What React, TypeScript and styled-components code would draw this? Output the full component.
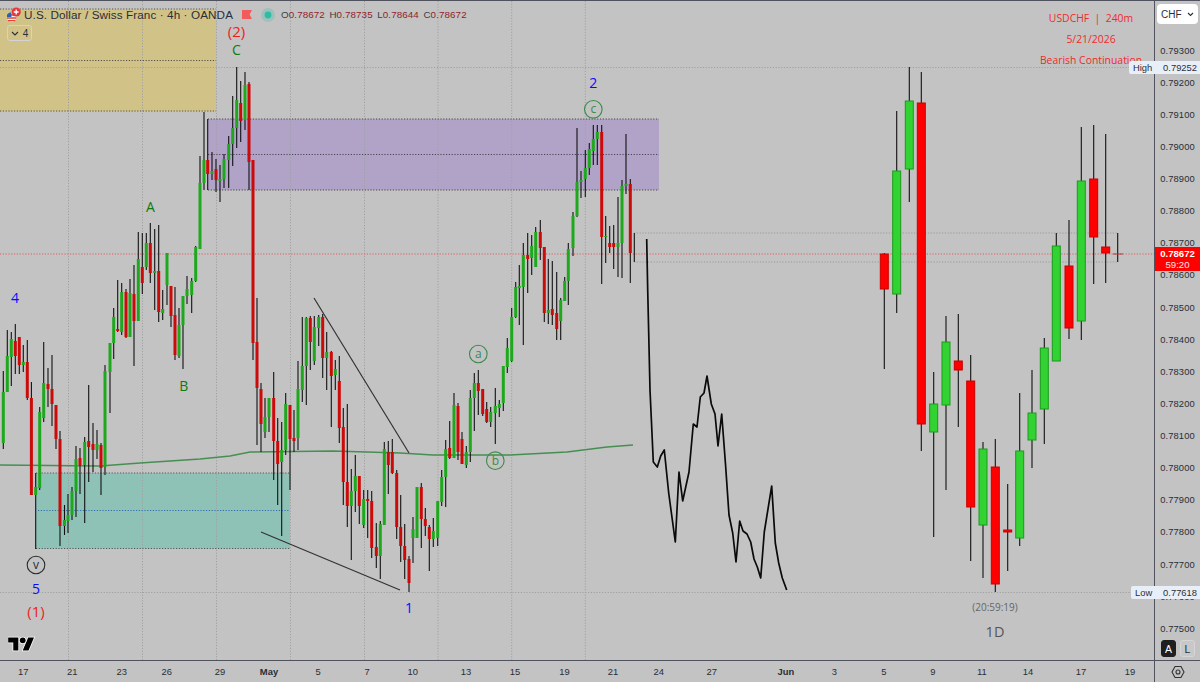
import React from 'react'
import styled, { createGlobalStyle } from 'styled-components'

type Candle = [number, number, number, number, number, 'g' | 'r']

// pixel positions read off the chart: x, wick top, wick bottom, body top, body bottom, colour
const h4Candles: Candle[] = [
  [3.3, 371, 449, 392, 443, 'g'], [7.3, 330, 392, 356, 392, 'g'], [11.3, 332, 386, 339, 357, 'g'], [15.3, 324, 374, 341, 356, 'r'],
  [19.3, 337, 374, 337, 365, 'r'], [23.3, 345, 372, 362, 365, 'g'], [27.3, 340, 400, 362, 398, 'r'], [31.4, 382, 495, 398, 495, 'r'],
  [35.7, 473, 549, 487, 495, 'g'], [39.7, 407, 490, 412, 488, 'g'], [43.7, 342, 422, 383, 418, 'g'], [48, 368, 407, 384, 389, 'r'],
  [52, 355, 426, 389, 404, 'r'], [56, 405, 449, 405, 439, 'r'], [60, 431, 546, 439, 526, 'r'], [64.5, 505, 535, 520, 526, 'g'],
  [68, 494, 533, 515, 521, 'g'], [72, 487, 520, 491, 515, 'g'], [76, 446, 517, 459, 491, 'g'], [80, 448, 494, 458, 465, 'r'],
  [84.7, 437, 523, 442, 465, 'g'], [88.7, 385, 482, 441, 447, 'r'], [93, 423, 472, 444, 450, 'r'], [97, 430, 459, 444, 450, 'g'],
  [101, 443, 495, 445, 468, 'r'], [105, 365, 475, 371, 467, 'g'], [110, 343, 413, 343, 372, 'g'], [113.7, 308, 359, 317, 343, 'g'],
  [117.7, 280, 332, 329, 331, 'r'], [121.7, 283, 335, 292, 332, 'g'], [126, 289, 338, 292, 337, 'r'], [130, 279, 337, 293, 337, 'g'],
  [134, 265, 366, 294, 321, 'r'], [138.3, 232, 321, 259, 321, 'g'], [142.3, 233, 294, 267, 283, 'r'], [146.3, 233, 270, 243, 267, 'g'],
  [150.3, 223, 283, 243, 273, 'r'], [154.7, 229, 310, 271, 273, 'g'], [158.7, 225, 322, 271, 312, 'r'], [162.7, 290, 320, 309, 313, 'g'],
  [167, 253, 305, 253, 285, 'g'], [171, 286, 327, 286, 316, 'r'], [175, 287, 360, 315, 355, 'r'], [179, 308, 358, 325, 356, 'g'],
  [183, 296, 369, 296, 325, 'g'], [187, 276, 304, 289, 296, 'g'], [191.7, 278, 313, 281, 295, 'g'], [195.7, 246, 282, 247, 281, 'g'],
  [200, 156, 249, 183, 249, 'g'], [204, 112, 190, 160, 183, 'g'], [207.7, 119, 190, 160, 174, 'r'], [212, 152, 180, 171, 174, 'g'],
  [216, 159, 192, 169, 180, 'r'], [220, 165, 202, 179, 181, 'g'], [224, 154, 188, 159, 179, 'g'], [228.7, 136, 188, 144, 160, 'g'],
  [232.7, 96, 166, 128, 144, 'g'], [236.7, 67, 148, 100, 128, 'g'], [240.7, 81, 142, 103, 121, 'r'], [245, 72, 130, 85, 120, 'g'],
  [249, 82, 190, 84, 162, 'r'], [253, 160, 360, 160, 343, 'r'], [257, 298, 445, 342, 388, 'r'], [261, 383, 452, 389, 424, 'r'],
  [265, 398, 438, 417, 432, 'g'], [269, 398, 432, 398, 417, 'g'], [273.7, 372, 480, 398, 441, 'r'], [277.7, 418, 505, 441, 464, 'r'],
  [281.7, 422, 536, 450, 462, 'g'], [285.7, 393, 455, 404, 450, 'g'], [290, 405, 490, 405, 439, 'r'], [294, 410, 452, 438, 441, 'r'],
  [298, 361, 450, 389, 438, 'g'], [302.3, 317, 402, 366, 390, 'g'], [306.3, 317, 405, 318, 366, 'g'], [310.3, 316, 370, 318, 342, 'r'],
  [314.3, 316, 365, 327, 361, 'g'], [318.7, 315, 346, 317, 328, 'g'], [322.7, 314, 378, 317, 358, 'r'], [326.7, 332, 390, 352, 358, 'g'],
  [331.3, 351, 427, 352, 376, 'r'], [335.3, 360, 390, 369, 375, 'g'], [339.3, 356, 443, 381, 428, 'r'], [343.3, 408, 505, 427, 482, 'r'],
  [347.3, 404, 527, 482, 506, 'r'], [351.3, 469, 560, 491, 506, 'g'], [355.3, 455, 512, 476, 491, 'g'], [359.3, 476, 524, 476, 506, 'r'],
  [363.7, 490, 528, 499, 525, 'g'], [367.7, 490, 538, 499, 501, 'r'], [371.7, 491, 558, 501, 548, 'r'], [376.3, 523, 568, 547, 556, 'r'],
  [380.3, 521, 579, 524, 556, 'g'], [384.3, 442, 525, 449, 525, 'g'], [388.3, 441, 494, 452, 465, 'r'], [392.3, 439, 474, 452, 473, 'r'],
  [396.7, 470, 539, 473, 527, 'r'], [400.7, 495, 562, 527, 546, 'r'], [404.7, 524, 579, 546, 560, 'r'], [409, 556, 592, 559, 583, 'r'],
  [413, 517, 563, 529, 538, 'g'], [417, 487, 538, 487, 538, 'g'], [421.3, 483, 548, 487, 519, 'r'], [425.3, 508, 536, 519, 526, 'r'],
  [429.3, 525, 571, 527, 539, 'r'], [433.3, 518, 547, 531, 539, 'g'], [437.7, 501, 546, 501, 538, 'g'], [441.7, 470, 506, 477, 502, 'g'],
  [445.7, 440, 507, 449, 477, 'g'], [449.7, 421, 459, 448, 458, 'r'], [454, 393, 458, 405, 458, 'g'], [458, 403, 460, 406, 452, 'r'],
  [462, 432, 464, 439, 464, 'r'], [466.3, 446, 468, 452, 465, 'g'], [470.3, 390, 462, 398, 452, 'g'], [474.3, 373, 431, 383, 398, 'g'],
  [478.3, 370, 415, 383, 391, 'r'], [482.7, 389, 416, 389, 414, 'r'], [486.7, 402, 423, 409, 422, 'r'], [490.7, 407, 427, 412, 422, 'g'],
  [495.3, 388, 444, 406, 413, 'g'], [499.3, 400, 417, 404, 408, 'g'], [503.3, 366, 411, 366, 403, 'g'], [507.3, 338, 373, 348, 367, 'g'],
  [511.7, 308, 362, 317, 361, 'g'], [515.7, 282, 318, 287, 317, 'g'], [519.3, 265, 325, 286, 288, 'g'], [523.3, 243, 345, 255, 287, 'g'],
  [527.7, 233, 293, 255, 259, 'r'], [531.7, 235, 275, 246, 258, 'g'], [535.7, 227, 267, 232, 267, 'g'], [540.3, 220, 260, 232, 248, 'r'],
  [544.3, 247, 322, 247, 313, 'r'], [548.3, 259, 324, 310, 313, 'g'], [552.3, 261, 325, 309, 315, 'r'], [556.7, 272, 340, 313, 329, 'r'],
  [560.7, 298, 340, 300, 321, 'g'], [564.7, 277, 301, 281, 301, 'g'], [568.3, 243, 305, 249, 281, 'g'], [573, 212, 256, 216, 248, 'g'],
  [577, 128, 217, 182, 216, 'g'], [581, 171, 198, 180, 182, 'g'], [585.3, 150, 197, 168, 179, 'g'], [589.3, 143, 175, 149, 168, 'g'],
  [593.3, 125, 165, 139, 151, 'g'], [597.3, 125, 165, 132, 139, 'g'], [601.7, 125, 284, 132, 237, 'r'], [605.7, 216, 263, 236, 237, 'g'],
  [609.7, 226, 253, 243, 247, 'r'], [613.7, 225, 269, 243, 247, 'r'], [618, 197, 277, 243, 247, 'g'], [622, 180, 278, 186, 243, 'g'],
  [626, 134, 194, 184, 186, 'g'], [630.3, 179, 283, 184, 253, 'r'], [634.3, 233, 262, 233, 233, 'r'],
]

const dailyCandles: Candle[] = [
  [884.3, 253, 369, 254, 289, 'r'], [896.7, 111, 313, 171, 294, 'g'], [909.3, 67, 202, 101, 169, 'g'], [921.3, 72, 451, 103, 424, 'r'],
  [933.7, 372, 537, 404, 432, 'g'], [946, 316, 490, 342, 405, 'g'], [958.3, 314, 427, 361, 370, 'r'], [970.7, 355, 561, 381, 507, 'r'],
  [983, 442, 578, 449, 525, 'g'], [995.3, 439, 592, 467, 584, 'r'], [1007.7, 484, 571, 530, 532, 'r'], [1019.7, 393, 546, 451, 538, 'g'],
  [1032, 370, 468, 413, 440, 'g'], [1044.3, 338, 444, 348, 409, 'g'], [1056.3, 233, 361, 246, 361, 'g'], [1069, 220, 339, 266, 328, 'r'],
  [1081.3, 127, 340, 181, 321, 'g'], [1093.7, 125, 284, 179, 237, 'r'], [1105.7, 134, 283, 247, 253, 'r'],
]

const projection =
  '646.7,239 647.7,290 648.7,333 650,390 653.3,462 657.3,467 660.7,456 664.3,450 668.7,493 675.3,542 679,472 682.7,501 689,472 693.3,424 697,427 700.3,397 704,393 707,376 711.3,404 715,414 718,446 721.7,414 725.7,467 729,515 732.7,533 736,562 739.7,521 743,531 747,534 750.7,542 754,559 757.3,567 760.7,578 764.3,532 771.7,486 775.3,543 778.7,563 782.3,578 786.7,590'

const movingAverage =
  '0,465 100,466 140,463 200,459 230,456 250,452 333,451 400,453 433,455 510,455 567,452 583,450 607,447 633,445'

const priceTicks = Array.from({ length: 19 }, (_, i) => (0.793 - i * 0.001).toFixed(5))

const timeTicks: [string, number, boolean?][] = [
  ['17', 23.3], ['21', 72.3], ['23', 121.7], ['26', 166.7], ['29', 220], ['May', 269, true], ['5', 318], ['7', 367],
  ['10', 412.7], ['13', 466], ['15', 515], ['19', 564.5], ['21', 613], ['24', 658.7], ['27', 711.7], ['Jun', 786, true],
  ['3', 834.5], ['5', 884], ['9', 933], ['11', 982], ['14', 1028], ['17', 1081], ['19', 1130],
]

const gridX = [68.5, 142.5, 216.5, 290.5, 364.5, 438, 511.7, 585.3]
const TICK_WIDTH = 28

const GlobalStyle = createGlobalStyle`
  body {
    margin: 0;
    background: #c3c3c3;
    font-family: 'Liberation Sans', Arial, sans-serif;
  }
`

const Screen = styled.div`
  position: relative;
  width: 1200px;
  height: 682px;
  overflow: hidden;
  display: grid;
  grid-template-columns: 1154px 46px;
  grid-template-rows: 660px 22px;
  background: #c3c3c3;
  color: #2a2e39;
`

const Pane = styled.div`
  position: relative;
  border-top: 1px solid #50535e;
`

const ChartSvg = styled.svg`
  display: block;
  width: 1154px;
  height: 659px;
`

const Box = styled.rect<{ $fill: string }>`
  fill: ${({ $fill }) => $fill};
`

const Dotted = styled.line<{ $stroke: string }>`
  stroke: ${({ $stroke }) => $stroke};
  stroke-width: 1;
  stroke-dasharray: 1.2 1.6;
`

const Wick = styled.line`
  stroke: #111;
  stroke-width: 1.1;
`

const SmallBody = styled.rect<{ $up: boolean }>`
  fill: ${({ $up }) => ($up ? '#1ea81e' : '#cc0a0a')};
`

const DailyBody = styled.rect<{ $up: boolean }>`
  fill: ${({ $up }) => ($up ? '#32d232' : '#ff0000')};
  stroke: ${({ $up }) => ($up ? '#189c18' : '#c80000')};
  stroke-width: 1;
`

const DojiDash = styled.line`
  stroke: #a83a3a;
  stroke-width: 1;
`

const TrendLine = styled.line`
  stroke: #333;
  stroke-width: 1.2;
`

const AvgLine = styled.polyline`
  fill: none;
  stroke: #468f52;
  stroke-width: 1.4;
`

const ProjectionLine = styled.polyline`
  fill: none;
  stroke: #0a0a0a;
  stroke-width: 1.7;
  stroke-linejoin: round;
`

const WaveText = styled.text<{ $fill: string; $size?: number; $weight?: number }>`
  fill: ${({ $fill }) => $fill};
  font-family: 'Open Sans', sans-serif;
  font-size: ${({ $size }) => $size ?? 14}px;
  font-weight: ${({ $weight }) => $weight ?? 400};
  text-anchor: middle;
`

const WaveRing = styled.circle<{ $stroke: string }>`
  fill: none;
  stroke: ${({ $stroke }) => $stroke};
  stroke-width: 1.1;
`

const Legend = styled.div`
  position: absolute;
  top: 4px;
  left: 6px;
  display: flex;
  align-items: center;
  height: 19px;
  font-size: 11.7px;
  white-space: nowrap;
`

const SymbolName = styled.span`
  margin-left: 3px;
  color: #2a2e39;
  letter-spacing: 0.1px;
`

const FlagIcon = styled.svg`
  display: block;
  flex: none;
  margin-left: 9px;
`

const SymbolIcon = styled.svg`
  display: block;
  flex: none;
`

const Ohlc = styled.div`
  display: flex;
  gap: 4.5px;
  margin-left: 6px;
  font-size: 9.8px;
  letter-spacing: 0.1px;
  color: #3a3d48;
`

const OhlcValue = styled.span`
  color: #8f1f2a;
`

const IndicatorToggle = styled.div`
  position: absolute;
  top: 24px;
  left: 7px;
  width: 25px;
  height: 16px;
  box-sizing: border-box;
  display: flex;
  align-items: center;
  justify-content: center;
  gap: 4px;
  border: 1px solid #d3d3d3;
  border-radius: 3px;
  font-size: 10px;
`

const LogoMark = styled.svg`
  position: absolute;
  left: 8px;
  top: 635px;
`

const PriceAxis = styled.div`
  position: relative;
  border-top: 1px solid #50535e;
  border-left: 1px solid #50535e;
  display: flex;
  flex-direction: column;
  align-items: center;
`

const CurrencyButton = styled.div`
  flex: none;
  width: 41px;
  height: 20px;
  margin-top: 3px;
  box-sizing: border-box;
  padding: 0 4px;
  display: flex;
  align-items: center;
  justify-content: space-between;
  background: #fff;
  border-radius: 4px;
  font-size: 10px;
`

const TickList = styled.div`
  margin-top: 10.6px;
  width: 100%;
`

const PriceTick = styled.div`
  height: 32.13px;
  line-height: 32.13px;
  font-size: 9.4px;
  letter-spacing: 0.1px;
  text-align: center;
  color: #2a2d36;
`

const ScaleButtons = styled.div`
  position: absolute;
  left: 6px;
  bottom: 3px;
  display: flex;
  gap: 4px;
`

const ScaleButton = styled.div<{ $active?: boolean }>`
  width: 15px;
  height: 17px;
  box-sizing: border-box;
  display: flex;
  align-items: center;
  justify-content: center;
  border-radius: 3px;
  border: 1px solid ${({ $active }) => ($active ? '#1f1f1f' : '#d6d6d6')};
  font-size: 10.5px;
  background: ${({ $active }) => ($active ? '#1f1f1f' : '#c8c8c8')};
  color: ${({ $active }) => ($active ? '#fff' : '#2a2e39')};
`

const TimeAxis = styled.div`
  display: flex;
  align-items: center;
  border-top: 1px solid #50535e;
`

const TimeTick = styled.div<{ $strong?: boolean }>`
  flex: none;
  width: ${TICK_WIDTH}px;
  text-align: center;
  font-size: 9.4px;
  font-weight: ${({ $strong }) => ($strong ? 700 : 400)};
  color: #2a2d36;
`

const SettingsCorner = styled.div`
  display: flex;
  align-items: center;
  justify-content: center;
  border-top: 1px solid #50535e;
  border-left: 1px solid #50535e;
`

const PriceTag = styled.div<{ $top: number; $left: number }>`
  position: absolute;
  top: ${({ $top }) => $top}px;
  left: ${({ $left }) => $left}px;
  right: 0;
  height: 13px;
  box-sizing: border-box;
  padding: 0 3px 0 4px;
  display: flex;
  align-items: center;
  justify-content: space-between;
  background: #e9eff9;
  border-radius: 2px 0 0 2px;
  font-size: 9.4px;
  color: #2a2e39;
`

const LastPriceTag = styled.div`
  position: absolute;
  top: 247px;
  left: 1155px;
  right: 0;
  height: 24px;
  display: flex;
  flex-direction: column;
  align-items: center;
  justify-content: center;
  background: #ff0000;
  color: #fff;
  font-size: 9.6px;
  font-weight: 700;
  line-height: 11.5px;
`

const Countdown = styled.span`
  font-weight: 400;
  color: #ffe4e4;
`

const Candles: React.FC<{ items: Candle[]; daily?: boolean }> = ({ items, daily }) => (
  <>
    {items.map(([x, wickTop, wickBottom, bodyTop, bodyBottom, tone]) => (
      <g key={x}>
        <Wick x1={x} x2={x} y1={wickTop} y2={wickBottom} />
        {daily ? (
          <DailyBody $up={tone === 'g'} x={x - 4} y={bodyTop} width={8} height={bodyBottom - bodyTop} />
        ) : (
          <SmallBody $up={tone === 'g'} x={x - 1.5} y={bodyTop} width={3} height={bodyBottom - bodyTop} />
        )}
      </g>
    ))}
  </>
)

const WaveCircle: React.FC<{ x: number; y: number; label: string; color: string }> = ({ x, y, label, color }) => (
  <g>
    <WaveRing $stroke={color} cx={x} cy={y} r={8.8} />
    <WaveText $fill={color} $size={12} x={x} y={y + 4}>{label}</WaveText>
  </g>
)

const App: React.FC = () => {
  return (
    <Screen>
      <GlobalStyle />
      <Pane>
        <ChartSvg viewBox="0 1 1154 659">
          <Box $fill="#d1c388" x={0} y={9} width={216} height={102} />
          <Box $fill="#b1a3c8" x={208} y={119} width={451} height={71} />
          <Box $fill="#8fc2b7" x={36} y={473} width={254} height={75.5} />

          {gridX.map(x => (
            <Dotted key={x} $stroke="#a0a0a0" x1={x} x2={x} y1={1} y2={660} />
          ))}

          <Dotted $stroke="#55504a" x1={0} x2={216} y1={9} y2={9} />
          <Dotted $stroke="#55504a" x1={0} x2={216} y1={60.5} y2={60.5} />
          <Dotted $stroke="#55504a" x1={0} x2={216} y1={111} y2={111} />
          <Dotted $stroke="#a0a0a0" x1={0} x2={1130} y1={67.5} y2={67.5} />
          <Dotted $stroke="#4a4456" x1={208} x2={659} y1={119} y2={119} />
          <Dotted $stroke="#4a4456" x1={208} x2={659} y1={154.5} y2={154.5} />
          <Dotted $stroke="#4a4456" x1={208} x2={659} y1={190} y2={190} />
          <Dotted $stroke="#4a5a56" x1={36} x2={290} y1={473} y2={473} />
          <Dotted $stroke="#2f6fb0" x1={38} x2={290} y1={510.5} y2={510.5} />
          <Dotted $stroke="#4a5a56" x1={36} x2={290} y1={548.5} y2={548.5} />
          <Dotted $stroke="#a0a0a0" x1={0} x2={1130} y1={592.5} y2={592.5} />
          <Dotted $stroke="#9a9a9a" x1={634} x2={1118} y1={233} y2={233} />
          <Dotted $stroke="#9a9a9a" x1={634} x2={1118} y1={262} y2={262} />
          <Dotted $stroke="#e25c5c" x1={0} x2={1154} y1={254} y2={254} />

          <AvgLine points={movingAverage} />
          <Candles items={h4Candles} />
          <Candles items={dailyCandles} daily />
          <Wick x1={1117.7} x2={1117.7} y1={233} y2={262} />
          <DojiDash x1={1113} x2={1123} y1={254} y2={254} />

          <TrendLine x1={314} y1={298} x2={409} y2={453} />
          <TrendLine x1={261} y1={532} x2={400} y2={590} />
          <ProjectionLine points={projection} />

          <WaveText $fill="#f01c1c" $size={15} x={236.5} y={37}>(2)</WaveText>
          <WaveText $fill="#0f7a0f" $weight={500} x={236.5} y={55}>C</WaveText>
          <WaveText $fill="#0f7a0f" $weight={500} x={150.5} y={212}>A</WaveText>
          <WaveText $fill="#0f7a0f" $weight={500} x={183.7} y={391}>B</WaveText>
          <WaveText $fill="#0a0aff" $weight={500} x={15} y={303}>4</WaveText>
          <WaveText $fill="#0a0aff" $weight={500} x={36} y={594}>5</WaveText>
          <WaveText $fill="#f01c1c" $size={15} x={36} y={617}>(1)</WaveText>
          <WaveText $fill="#0a0aff" $weight={500} x={593.3} y={88}>2</WaveText>
          <WaveText $fill="#0a0aff" $weight={500} x={409} y={613}>1</WaveText>
          <WaveCircle x={36} y={565} label="v" color="#2b2b2b" />
          <WaveCircle x={478.3} y={354} label="a" color="#3b8a4b" />
          <WaveCircle x={495.3} y={460.7} label="b" color="#3b8a4b" />
          <WaveCircle x={593.3} y={109.3} label="c" color="#3b8a4b" />

          <WaveText $fill="#666" $size={10} x={995} y={610.5}>(20:59:19)</WaveText>
          <WaveText $fill="#555" $size={14.5} x={995} y={637}>1D</WaveText>

          <WaveText $fill="#f02a2a" $size={10.4} x={1091} y={22}>{'USDCHF  \u00a0|\u00a0  240m'}</WaveText>
          <WaveText $fill="#f02a2a" $size={10.4} x={1091} y={43}>5/21/2026</WaveText>
          <WaveText $fill="#f02a2a" $size={10.4} x={1091} y={64}>Bearish Continuation</WaveText>
        </ChartSvg>

        <Legend>
          <SymbolIcon width={15} height={16} viewBox="0 0 15 16">
            <circle cx={5.7} cy={10} r={4.8} fill="#f4f4f4" />
            <path d="M1 8h9.4M1 11h9.4M2 13.6h7.4" stroke="#e2453c" strokeWidth={1.3} />
            <path d="M1 10V8.2A4.8 4.8 0 0 1 5.4 5.2V10z" fill="#2f5fb0" />
            <circle cx={10.2} cy={5} r={4.6} fill="#e5383b" />
            <path d="M10.2 2.6v4.8M7.8 5h4.8" stroke="#fff" strokeWidth={1.3} />
          </SymbolIcon>
          <SymbolName>U.S. Dollar / Swiss Franc · 4h · OANDA</SymbolName>
          <FlagIcon width={10} height={9} viewBox="0 0 10 9">
            <path d="M0 0h10L7.6 4.5 10 9H0z" fill="#f25b5b" />
          </FlagIcon>
          <FlagIcon width={14} height={14} viewBox="0 0 14 14">
            <circle cx={7} cy={7} r={7} fill="#2bb8a0" fillOpacity={0.22} />
            <circle cx={7} cy={7} r={3.4} fill="#2cbda4" />
          </FlagIcon>
          <Ohlc>
            <span>O<OhlcValue>0.78672</OhlcValue></span>
            <span>H<OhlcValue>0.78735</OhlcValue></span>
            <span>L<OhlcValue>0.78644</OhlcValue></span>
            <span>C<OhlcValue>0.78672</OhlcValue></span>
          </Ohlc>
        </Legend>

        <IndicatorToggle>
          <svg width={8} height={5} viewBox="0 0 8 5">
            <path d="M1 1l3 3 3-3" fill="none" stroke="#2a2e39" strokeWidth={1.1} />
          </svg>
          4
        </IndicatorToggle>

        <LogoMark width={28} height={16} viewBox="0 0 38 22">
          <path
            d="M14 20H7V9H0V2h14zM28 20h-8l7.5-18h8z"
            fill="#000"
            stroke="#fff"
            strokeWidth={2}
            paintOrder="stroke"
          />
          <circle cx={20} cy={6} r={4} fill="#000" stroke="#fff" strokeWidth={2} paintOrder="stroke" />
        </LogoMark>
      </Pane>

      <PriceAxis>
        <CurrencyButton>
          CHF
          <svg width={7} height={5} viewBox="0 0 7 5">
            <path d="M1 1l2.5 2.5L6 1" fill="none" stroke="#2a2e39" strokeWidth={1.1} />
          </svg>
        </CurrencyButton>
        <TickList>
          {priceTicks.map(price => (
            <PriceTick key={price}>{price}</PriceTick>
          ))}
        </TickList>
        <ScaleButtons>
          <ScaleButton $active>A</ScaleButton>
          <ScaleButton>L</ScaleButton>
        </ScaleButtons>
      </PriceAxis>

      <TimeAxis>
        {timeTicks.map(([label, center, strong], i) => (
          <TimeTick
            key={`${label}-${center}`}
            $strong={strong}
            style={{ marginLeft: center - (i ? timeTicks[i - 1][1] : TICK_WIDTH / 2) - (i ? TICK_WIDTH : 0) }}
          >
            {label}
          </TimeTick>
        ))}
      </TimeAxis>

      <SettingsCorner>
        <svg width={14} height={14} viewBox="0 0 14 14">
          <path d="M4 1.5h6L13 7l-3 5.5H4L1 7z" fill="none" stroke="#333" strokeWidth={1.1} />
          <circle cx={7} cy={7} r={2} fill="none" stroke="#333" strokeWidth={1.1} />
        </svg>
      </SettingsCorner>

      <PriceTag $top={61} $left={1129}>
        <span>High</span>
        <span>0.79252</span>
      </PriceTag>
      <LastPriceTag>
        0.78672
        <Countdown>59:20</Countdown>
      </LastPriceTag>
      <PriceTag $top={586} $left={1131}>
        <span>Low</span>
        <span>0.77618</span>
      </PriceTag>
    </Screen>
  )
}

export default App
